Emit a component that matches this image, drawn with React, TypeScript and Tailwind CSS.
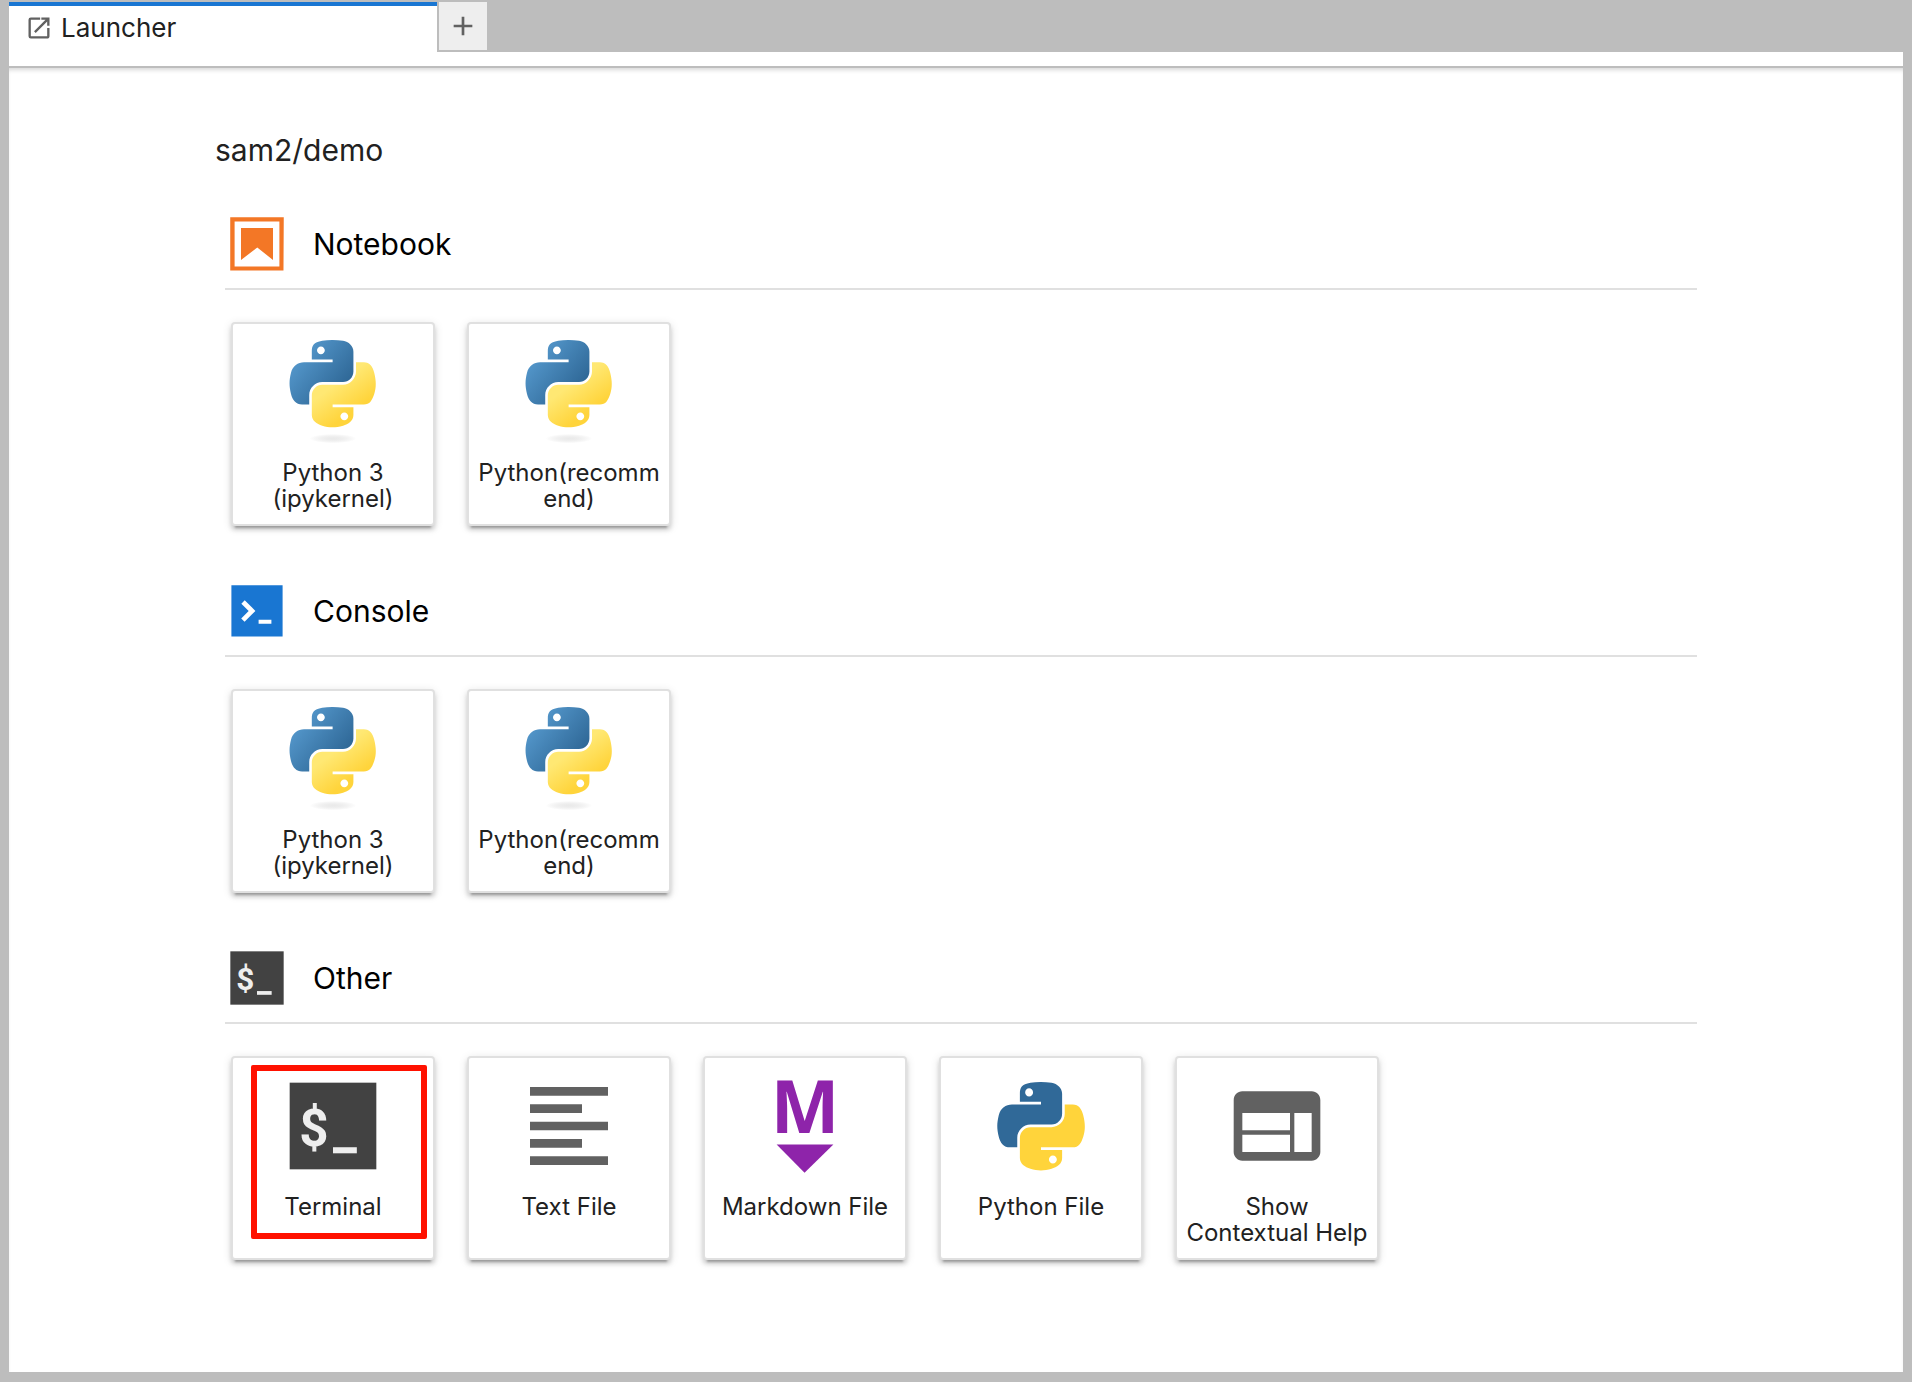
import type { ReactNode } from 'react';

const BLUE_SNAKE =
  'M54.92 0C50.34.02 45.96.41 42.11 1.09 30.76 3.1 28.7 7.29 28.7 15.03v10.22h26.81v3.41H18.64c-7.79 0-14.62 4.68-16.75 13.59-2.46 10.21-2.57 16.59 0 27.25 1.91 7.94 6.46 13.59 14.25 13.59h9.22V70.84c0-8.85 7.66-16.66 16.75-16.66h26.78c7.45 0 13.41-6.14 13.41-13.62V15.03c0-7.27-6.13-12.72-13.41-13.94C64.28.33 59.5-.02 54.92 0zm-14.5 8.22c2.77 0 5.03 2.3 5.03 5.12s-2.26 5.09-5.03 5.09c-2.78 0-5.03-2.28-5.03-5.09s2.25-5.12 5.03-5.12z';
const YELLOW_SNAKE =
  'M85.64 28.66v11.9c0 9.23-7.83 17-16.75 17H42.11c-7.34 0-13.41 6.28-13.41 13.63v25.53c0 7.27 6.32 11.54 13.41 13.62 8.49 2.5 16.63 2.95 26.78 0 6.75-1.95 13.41-5.89 13.41-13.62V86.5H55.51v-3.41H95.7c7.79 0 10.7-5.44 13.41-13.59 2.8-8.4 2.68-16.48 0-27.25-1.93-7.76-5.6-13.59-13.41-13.59zM70.58 93.31c2.78 0 5.03 2.28 5.03 5.09 0 2.83-2.25 5.13-5.03 5.13-2.77 0-5.03-2.3-5.03-5.13 0-2.81 2.26-5.09 5.03-5.09z';

function LauncherIcon() {
  return (
    <svg viewBox="0 0 24 24" className="size-7 shrink-0" fill="#616161" aria-hidden>
      <path d="M19 19H5V5h8V3H5a2 2 0 0 0-2 2v14a2 2 0 0 0 2 2h14c1.1 0 2-.9 2-2v-7h-2v7zM14 3v2h3.59l-9.83 9.83 1.41 1.41L19 6.41V10h2V3h-7z" />
    </svg>
  );
}

function NotebookIcon() {
  return (
    <svg viewBox="0 0 22 22" className="size-16" fill="#f37726" aria-hidden>
      <path d="M18.7 3.3v15.4H3.3V3.3h15.4m1.5-1.5H1.8v18.3h18.3l.1-18.3z" />
      <path d="M16.5 16.5l-5.4-4.3-5.6 4.3v-11h11z" />
    </svg>
  );
}

function ConsoleIcon() {
  return (
    <svg viewBox="0 0 200 200" className="size-16" aria-hidden>
      <path fill="#1976d2" d="M20 19.8h160v159.9H20z" />
      <path
        fill="#fff"
        d="M105 127.3h40v12.8h-40zM51.1 77L74 99.9l-23.3 23.3 10.5 10.5 23.3-23.3L95 99.9 84.5 89.4 61.6 66.5z"
      />
    </svg>
  );
}

function TerminalIcon({ className }: { className: string }) {
  return (
    <svg viewBox="0 0 24 24" className={className} aria-hidden>
      <rect x="2" y="2" width="20" height="20" fill="#424242" />
      <text x="4.2" y="16.6" fontSize="11.8" className="font-[Roboto,sans-serif] font-bold" fill="#eee">
        $
      </text>
      <rect x="12" y="16.9" width="5.5" height="1.4" fill="#eee" />
    </svg>
  );
}

function KernelIcon({ id }: { id: string }) {
  return (
    <svg viewBox="-11 0 134 134" className="size-26" aria-hidden>
      <defs>
        <linearGradient id={`${id}-blue`} gradientUnits="userSpaceOnUse" x1="5" y1="8" x2="69" y2="60">
          <stop offset="0" stopColor="#5a9fd4" />
          <stop offset="1" stopColor="#306998" />
        </linearGradient>
        <linearGradient id={`${id}-yellow`} gradientUnits="userSpaceOnUse" x1="78" y1="94" x2="54" y2="61">
          <stop offset="0" stopColor="#ffd43b" />
          <stop offset="1" stopColor="#ffe873" />
        </linearGradient>
        <radialGradient id={`${id}-shade`}>
          <stop offset="0" stopColor="#b8b8b8" stopOpacity="0.3" />
          <stop offset="1" stopColor="#7f7f7f" stopOpacity="0" />
        </radialGradient>
      </defs>
      <path fill={`url(#${id}-blue)`} d={BLUE_SNAKE} />
      <path fill={`url(#${id}-yellow)`} d={YELLOW_SNAKE} />
      <ellipse cx="56" cy="127" rx="30" ry="6" fill={`url(#${id}-shade)`} />
    </svg>
  );
}

function TextFileIcon() {
  return (
    <svg viewBox="0 0 24 24" className="size-26" fill="#616161" aria-hidden>
      <path d="M15 15H3v2h12v-2zm0-8H3v2h12V7zM3 13h18v-2H3v2zm0 8h18v-2H3v2zM3 3v2h18V3H3z" />
    </svg>
  );
}

function MarkdownIcon() {
  return (
    <svg viewBox="0 0 22 22" className="size-26 overflow-visible" fill="#8e24aa" aria-hidden>
      <text x="11" y="12.4" fontSize="15.4" textAnchor="middle" className="font-['Open_Sans',sans-serif] font-bold">
        M
      </text>
      <path d="M5 14.9h12l-6.1 6z" />
    </svg>
  );
}

function PythonFileIcon() {
  return (
    <svg viewBox="-10 -10 131 132" className="size-26" aria-hidden>
      <path fill="#306998" d={BLUE_SNAKE} />
      <path fill="#ffd43b" d={YELLOW_SNAKE} />
    </svg>
  );
}

function HelpIcon() {
  return (
    <svg viewBox="0 0 24 24" className="size-26" fill="#616161" aria-hidden>
      <path d="M20 4H4c-1.1 0-1.99.9-1.99 2L2 18c0 1.1.9 2 2 2h16c1.1 0 2-.9 2-2V6c0-1.1-.9-2-2-2zm-5 14H4v-4h11v4zm0-5H4V9h11v4zm5 5h-4V9h4v9z" />
    </svg>
  );
}

type Card = { label: string; icon: ReactNode; marked?: boolean };

const sections: { title: string; icon: ReactNode; cards: Card[] }[] = [
  {
    title: 'Notebook',
    icon: <NotebookIcon />,
    cards: [
      { label: 'Python 3 (ipykernel)', icon: <KernelIcon id="nb-ipykernel" /> },
      { label: 'Python(recommend)', icon: <KernelIcon id="nb-recommend" /> },
    ],
  },
  {
    title: 'Console',
    icon: <ConsoleIcon />,
    cards: [
      { label: 'Python 3 (ipykernel)', icon: <KernelIcon id="con-ipykernel" /> },
      { label: 'Python(recommend)', icon: <KernelIcon id="con-recommend" /> },
    ],
  },
  {
    title: 'Other',
    icon: <TerminalIcon className="size-16" />,
    cards: [
      { label: 'Terminal', icon: <TerminalIcon className="size-26" />, marked: true },
      { label: 'Text File', icon: <TextFileIcon /> },
      { label: 'Markdown File', icon: <MarkdownIcon /> },
      { label: 'Python File', icon: <PythonFileIcon /> },
      { label: 'Show Contextual Help', icon: <HelpIcon /> },
    ],
  },
];

function LauncherCard({ label, icon, marked }: Card) {
  return (
    <button
      type="button"
      className="relative flex size-51 flex-col items-center rounded-sm border-2 border-[#e0e0e0] bg-white px-2 pt-4 shadow-[0_6px_2px_-4px_rgba(0,0,0,0.24),0_4px_4px_0_rgba(0,0,0,0.14),0_2px_10px_0_rgba(0,0,0,0.12)]"
    >
      {icon}
      <span className="mt-4 w-full text-center text-2xl/[26px] break-words text-[#212121]">{label}</span>
      {marked && (
        <span className="absolute top-[7px] left-[18px] h-[174px] w-44 rounded-xs border-6 border-[#ff1100]" aria-hidden />
      )}
    </button>
  );
}

export default function App() {
  return (
    <div className="flex min-h-screen flex-col bg-[#bdbdbd] px-[9px] pt-0.5 pb-2.5 font-[Inter,sans-serif] text-[#212121]">
      <div className="flex items-start" role="tablist">
        <button
          type="button"
          role="tab"
          aria-selected
          className="flex h-[50px] w-[428px] items-center gap-2 border-t-4 border-[#1976d2] bg-white px-4 pb-0.5 text-[26px]/8"
        >
          <LauncherIcon />
          Launcher
        </button>
        <button
          type="button"
          aria-label="New Launcher"
          className="ml-0.5 flex size-12 items-center justify-center bg-[#eee]"
        >
          <svg viewBox="0 0 24 24" className="size-8" fill="#616161" aria-hidden>
            <path d="M19 13h-6v6h-2v-6H5v-2h6V5h2v6h6v2z" />
          </svg>
        </button>
      </div>
      <div className="h-4 border-b-2 border-[#bdbdbd] bg-white" />
      <main className="grow bg-white pb-10 shadow-[inset_0_4px_4px_-2px_rgba(0,0,0,0.16)]">
        <div className="mx-auto max-w-[1482px]">
          <h1 className="pt-16 text-[30px]/9">sam2/demo</h1>
          <div className="mt-11 ml-2.5 flex flex-col gap-[53px]">
            {sections.map((section) => (
              <section key={section.title}>
                <div className="flex items-center gap-6 border-b-2 border-[#e0e0e0] pb-3">
                  {section.icon}
                  <h2 className="text-[30px]/9 text-black">{section.title}</h2>
                </div>
                <div className="flex flex-wrap gap-8 px-1.5 pt-8">
                  {section.cards.map((card) => (
                    <LauncherCard key={card.label} {...card} />
                  ))}
                </div>
              </section>
            ))}
          </div>
        </div>
      </main>
    </div>
  );
}
